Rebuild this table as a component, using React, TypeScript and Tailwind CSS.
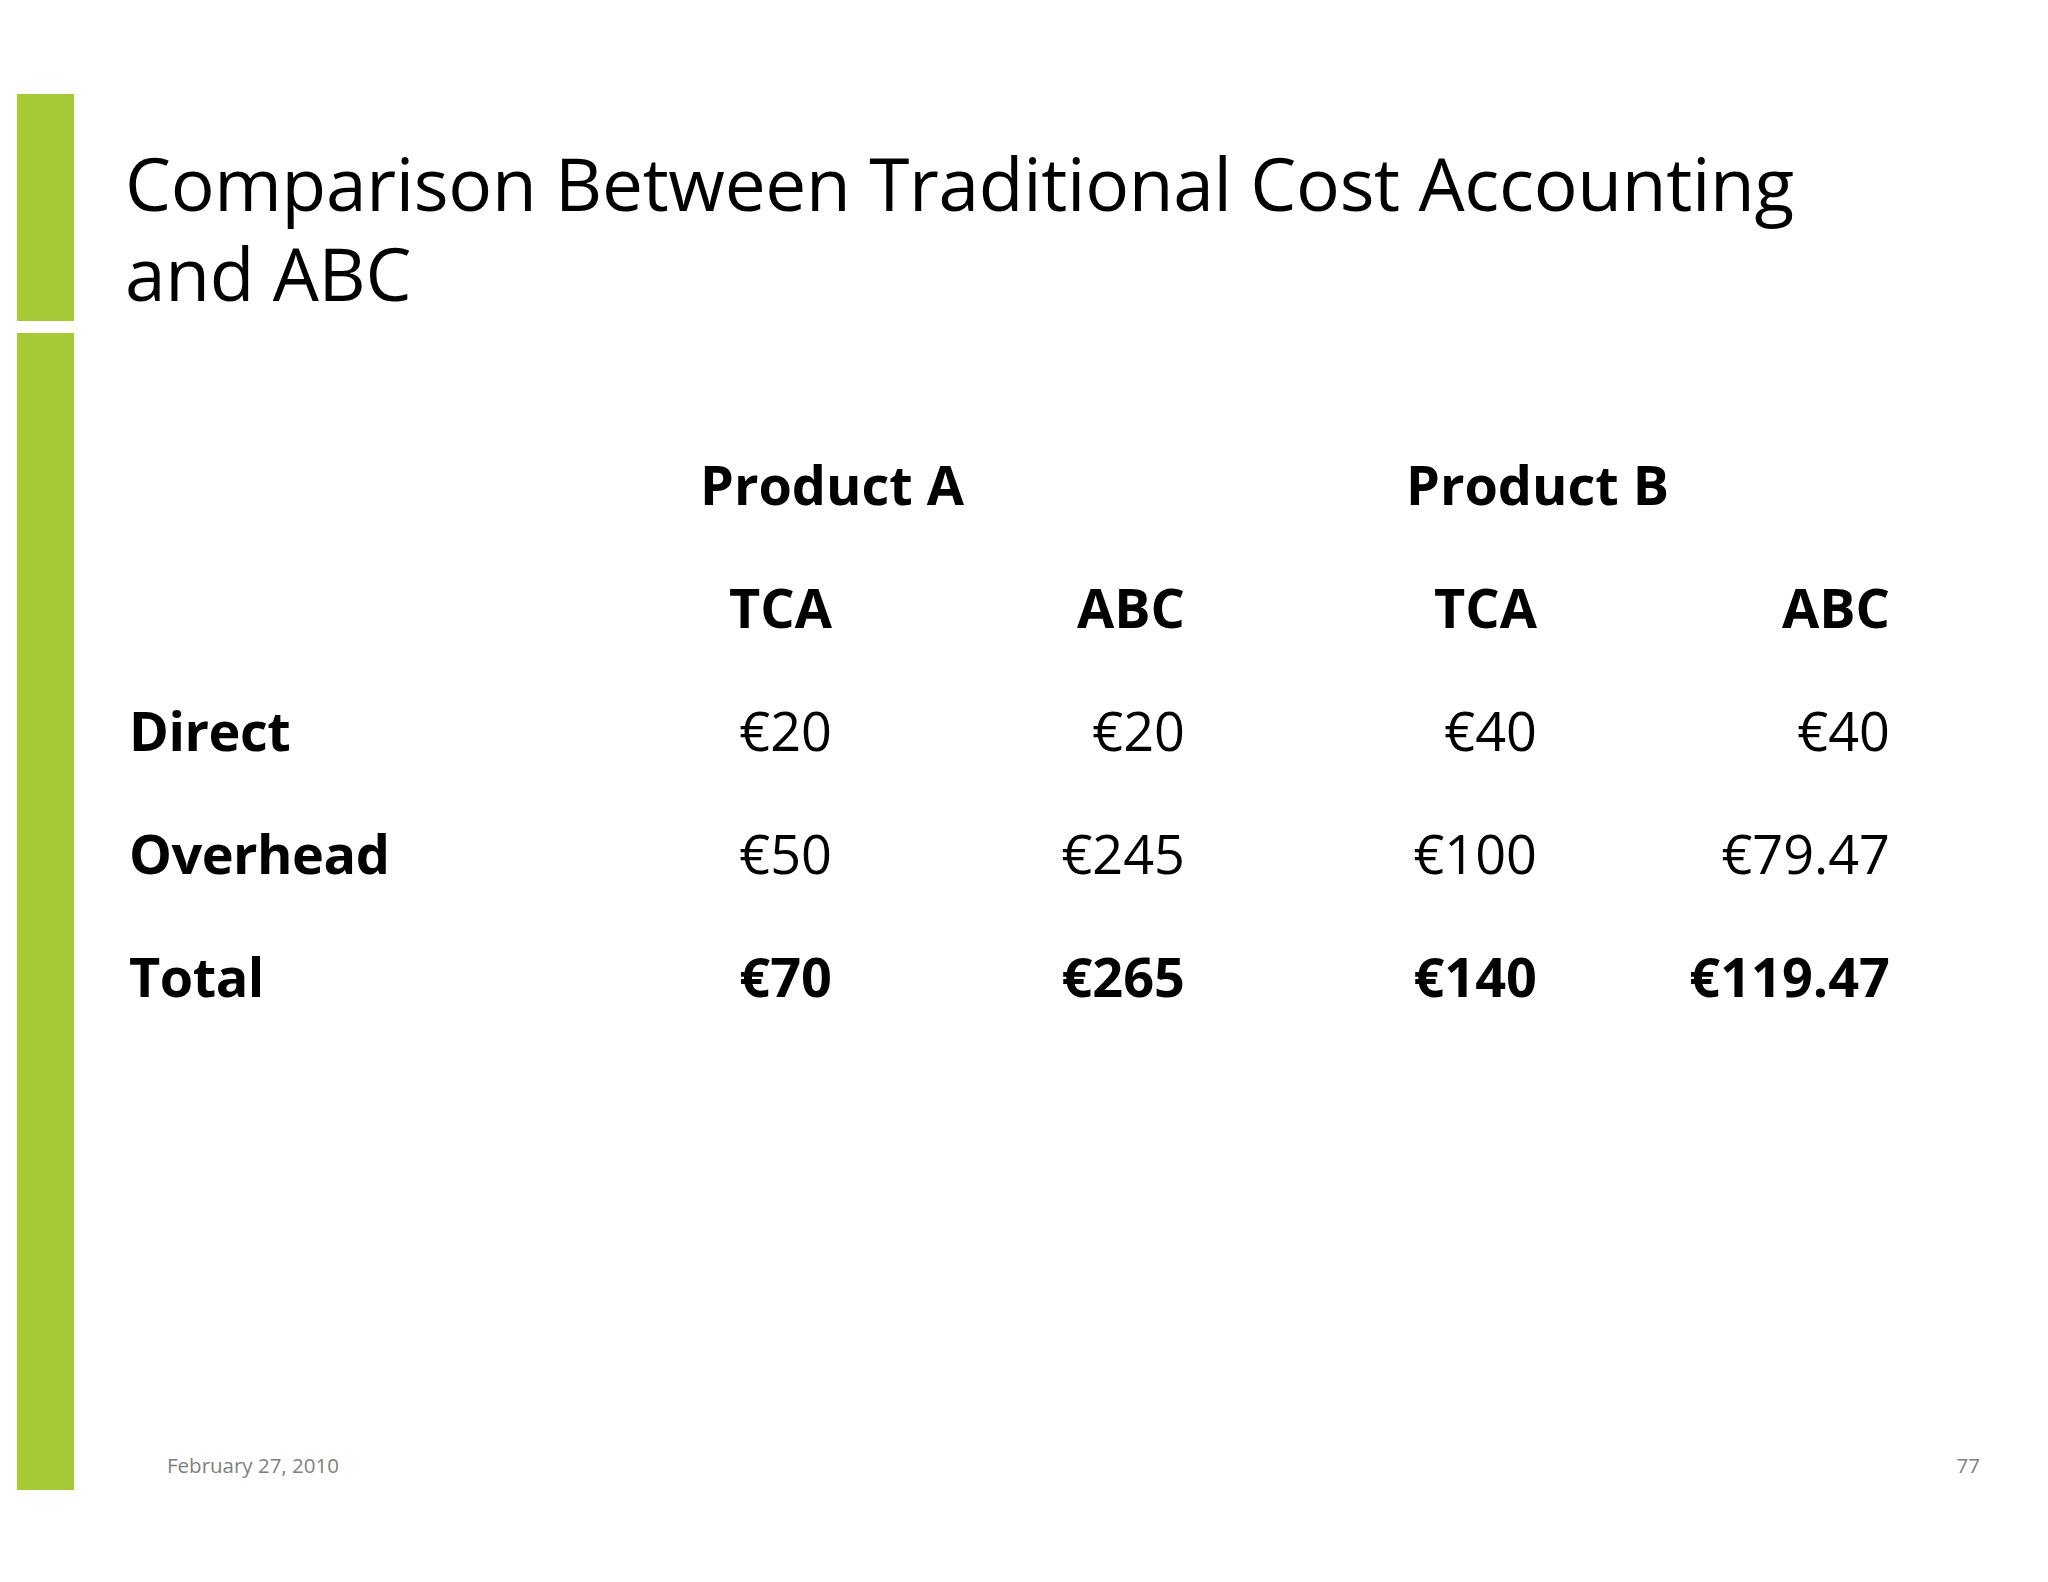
const rows = [
  { label: 'Direct', values: ['€20', '€20', '€40', '€40'], bold: false },
  { label: 'Overhead', values: ['€50', '€245', '€100', '€79.47'], bold: false },
  { label: 'Total', values: ['€70', '€265', '€140', '€119.47'], bold: true },
]

const font = { fontFamily: '"Open Sans", "Noto Sans", sans-serif' }

export default function App() {
  return (
    <div className="w-[2048px] h-[1582px] bg-white flex text-black" style={font}>
      {/* accent bar */}
      <div className="ml-[17px] w-[57px] pt-[94px] flex flex-col gap-[12px]">
        <div className="h-[227px] bg-[#a6ca35]" />
        <div className="h-[1157px] bg-[#a6ca35]" />
      </div>

      <div className="flex-1 flex flex-col">
        <h1 className="ml-[51px] mt-[138px] text-[73px] leading-[90px] font-normal tracking-[-0.3px]">
          Comparison Between Traditional Cost Accounting
          <br />
          and ABC
        </h1>

        <div className="ml-[55px] mt-[105px] grid grid-cols-[350px_353px_353px_352px_353px] text-[54px] font-bold">
          <div className="h-[123px] leading-[123px]" />
          <div className="col-span-2 h-[123px] leading-[123px] text-center">Product A</div>
          <div className="col-span-2 h-[123px] leading-[123px] text-center">Product B</div>

          <div className="h-[123px] leading-[123px]" />
          <div className="h-[123px] leading-[123px] text-right">TCA</div>
          <div className="h-[123px] leading-[123px] text-right">ABC</div>
          <div className="h-[123px] leading-[123px] text-right">TCA</div>
          <div className="h-[123px] leading-[123px] text-right">ABC</div>

          {rows.map((row) => (
            <div key={row.label} className="contents">
              <div className="h-[123px] leading-[123px] tracking-[-0.5px]">{row.label}</div>
              {row.values.map((v, i) => (
                <div
                  key={i}
                  className={
                    row.bold
                      ? 'h-[123px] leading-[123px] text-right font-bold'
                      : 'h-[123px] leading-[123px] text-right font-normal'
                  }
                >
                  {v}
                </div>
              ))}
            </div>
          ))}
        </div>

        <div className="mt-auto mb-[102px] ml-[93px] mr-[68px] flex justify-between text-[20.5px] leading-[30px] text-[#7f7f7f]">
          <span>February 27, 2010</span>
          <span>77</span>
        </div>
      </div>
    </div>
  )
}
